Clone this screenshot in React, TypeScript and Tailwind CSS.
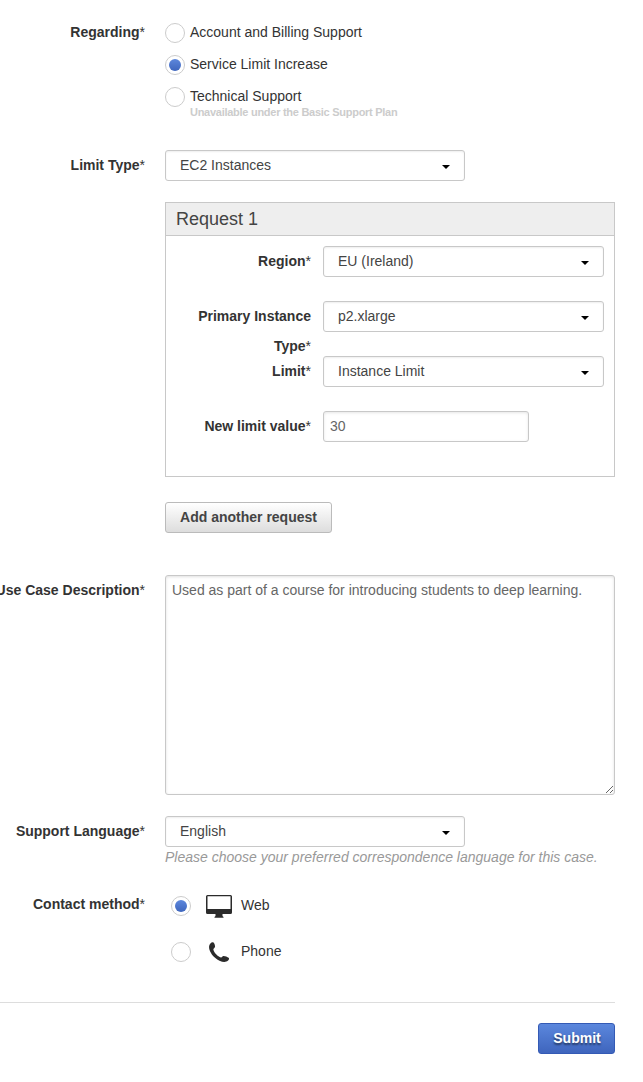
import type { ReactNode } from "react";
import clsx from "clsx";

function Label({ children, className }: { children: ReactNode; className?: string }) {
  return (
    <div className={clsx("shrink-0 text-right font-bold leading-[30px] text-[#333]", className)}>
      {children}
      <span className="font-normal">*</span>
    </div>
  );
}

function Row({ label, className, children }: { label: string; className: string; children: ReactNode }) {
  return (
    <div className={clsx("flex gap-5", className)}>
      <div className="flex w-[145px] shrink-0 justify-end">
        <Label className="whitespace-nowrap">{label}</Label>
      </div>
      <div className="w-[450px] shrink-0">{children}</div>
    </div>
  );
}

function Radio({ checked = false }: { checked?: boolean }) {
  return (
    <span className="flex size-5 shrink-0 items-center justify-center rounded-full border border-[#ccc] bg-white">
      {checked && <span className="size-3 rounded-full bg-linear-to-b from-[#5d87dc] to-[#3f66bd]" />}
    </span>
  );
}

function Select({ value, className }: { value: string; className: string }) {
  return (
    <button
      type="button"
      className={clsx(
        "flex h-[31px] items-center justify-between rounded-[3px] border border-[#c8c8c8] bg-white pr-[14px] pl-[14px] text-left text-[#444] shadow-[inset_0_1px_2px_rgba(0,0,0,0.07)]",
        className,
      )}
    >
      <span className="leading-[29px]">{value}</span>
      <svg className="mt-[2px] h-1 w-2" viewBox="0 0 8 4">
        <path d="M0 0h8L4 4z" fill="#000" />
      </svg>
    </button>
  );
}

function RadioOption({ label, checked, note }: { label: string; checked?: boolean; note?: string }) {
  return (
    <div className="flex h-8 gap-[5px]">
      <div className="pt-[6px]">
        <Radio checked={checked} />
      </div>
      <div>
        <div className="leading-[30px] text-[#333]">{label}</div>
        {note && (
          <div className="-mt-[5px] text-[11px] leading-3 font-bold tracking-[-0.27px] text-[#ccc]">{note}</div>
        )}
      </div>
    </div>
  );
}

function Field({ label, children }: { label: string; children: ReactNode }) {
  return (
    <div className="flex h-[55px] gap-3">
      <Label className="w-[135px]">{label}</Label>
      {children}
    </div>
  );
}

function MonitorIcon() {
  return (
    <svg className="h-[23px] w-[26px]" viewBox="0 0 26 23" fill="#2b2b2b">
      <path
        fillRule="evenodd"
        d="M1.500 0h23A1.500 1.500 0 0 1 26 1.500v16a1.500 1.500 0 0 1-1.500 1.500H16.500v2l1 1v.7H8.500V22l1-1v-2H1.500A1.500 1.500 0 0 1 0 17.500v-16A1.500 1.500 0 0 1 1.500 0zM1.500 1.200V14h23V1.200z"
      />
    </svg>
  );
}

function PhoneIcon() {
  return (
    <svg className="size-5" viewBox="0 0 20 20" fill="#2b2b2b">
      <path d="M1.400 1.500C2.400.4 3.700-.2 4.500.6c1 1 1.700 3.200 1.500 4.400-.2 1-1.800 1.400-1.600 2.500.5 3 4.500 7.200 7.500 7.900 1.200.2 1.400-1.400 2.500-1.500 1.500-.1 4 .8 5.200 1.900.9.800.2 2-.8 3-1.700 1.500-4.800 1.600-8.300-.1C5.500 16.300 1.800 12 .4 7.500-.3 5 .1 2.900 1.400 1.500z" />
    </svg>
  );
}

export default function App() {
  return (
    <form className="h-[1082px] w-[643px] overflow-hidden bg-white pt-[17px] font-['Liberation_Sans',Arial,sans-serif] text-[14px]">
      <Row label="Regarding" className="h-[133px]">
        <RadioOption label="Account and Billing Support" />
        <RadioOption label="Service Limit Increase" checked />
        <RadioOption label="Technical Support" note="Unavailable under the Basic Support Plan" />
      </Row>

      <Row label="Limit Type" className="h-[52px]">
        <Select value="EC2 Instances" className="w-[300px]" />
      </Row>

      <section className="ml-[165px] h-[275px] w-[450px] border border-[#c8c8c8]">
        <h2 className="h-[33px] border-b border-[#c8c8c8] bg-[#eee] pl-[10px] text-[18px] leading-[32px] text-[#444]">
          Request 1
        </h2>
        <div className="pt-[10px] pl-[10px]">
          <Field label="Region">
            <Select value="EU (Ireland)" className="w-[281px]" />
          </Field>
          <Field label="Primary Instance Type">
            <Select value="p2.xlarge" className="w-[281px]" />
          </Field>
          <Field label="Limit">
            <Select value="Instance Limit" className="w-[281px]" />
          </Field>
          <Field label="New limit value">
            <input
              defaultValue="30"
              className="h-[31px] w-[206px] rounded-[3px] border border-[#c8c8c8] px-[6px] pb-[2px] text-[#666] shadow-[inset_0_1px_3px_rgba(0,0,0,0.1)]"
            />
          </Field>
        </div>
      </section>

      <button
        type="button"
        className="mt-[25px] ml-[165px] block h-[31px] w-[167px] rounded-[3px] border border-[#bbb] bg-linear-to-b from-white to-[#ddd] text-center leading-[29px] font-bold whitespace-nowrap text-[#444]"
      >
        Add another request
      </button>

      <Row label="Use Case Description" className="mt-[42px] h-[241px]">
        <textarea
          defaultValue="Used as part of a course for introducing students to deep learning."
          className="block h-[220px] w-[450px] resize rounded-[3px] border border-[#c8c8c8] px-[6px] py-[4px] leading-5 text-[#666] shadow-[inset_0_1px_3px_rgba(0,0,0,0.12)]"
        />
      </Row>

      <Row label="Support Language" className="h-[73px]">
        <Select value="English" className="w-[300px]" />
        <p className="leading-5 whitespace-nowrap text-[#999] italic">
          Please choose your preferred correspondence language for this case.
        </p>
      </Row>

      <Row label="Contact method" className="h-[113px]">
        <div className="flex h-[46px] items-start pl-[6px]">
          <div className="pt-[7px]">
            <Radio checked />
          </div>
          <div className="w-[50px] pt-[6px] pl-[15px]">
            <MonitorIcon />
          </div>
          <span className="pt-px leading-[30px] text-[#333]">Web</span>
        </div>
        <div className="flex h-[46px] items-start pl-[6px]">
          <div className="pt-[7px]">
            <Radio />
          </div>
          <div className="w-[50px] pt-[7px] pl-[18px]">
            <PhoneIcon />
          </div>
          <span className="pt-px leading-[30px] text-[#333]">Phone</span>
        </div>
      </Row>

      <div className="flex w-[615px] justify-end border-t border-[#ddd] pt-5">
        <button
          type="submit"
          className="h-[31px] w-[77px] rounded-[3px] border border-[#345ab5] bg-linear-to-b from-[#5b87dd] to-[#3f65bd] pl-px leading-[29px] font-bold text-white [text-shadow:0_2px_2px_rgba(0,0,0,0.5)]"
        >
          Submit
        </button>
      </div>
    </form>
  );
}
